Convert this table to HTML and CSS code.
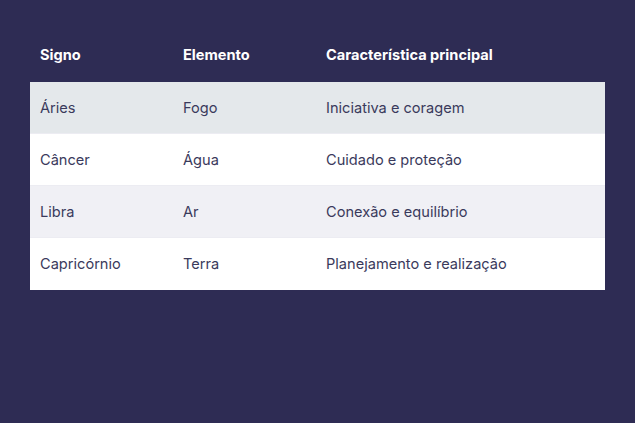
FILE: index.html
```html
<!DOCTYPE html>
<html lang="pt">
<head>
<meta charset="utf-8">
<link rel="stylesheet" href="styles.css">
</head>
<body>
<table class="signs">
  <thead>
    <tr><th class="c1">Signo</th><th class="c2">Elemento</th><th>Característica principal</th></tr>
  </thead>
  <tbody>
    <tr class="hl"><td>Áries</td><td>Fogo</td><td>Iniciativa e coragem</td></tr>
    <tr><td>Câncer</td><td>Água</td><td>Cuidado e proteção</td></tr>
    <tr class="alt"><td>Libra</td><td>Ar</td><td>Conexão e equilíbrio</td></tr>
    <tr><td>Capricórnio</td><td>Terra</td><td>Planejamento e realização</td></tr>
  </tbody>
</table>
</body>
</html>
```
FILE: styles.css
```css
html, body {
  margin: 0;
  background: #2e2c54;
}
body {
  padding: 30px;
  font-family: "Inter", sans-serif;
}
.signs {
  width: 575px;
  border-collapse: collapse;
  table-layout: fixed;
}
.signs .c1, .signs .c2 { width: 143px; }
.signs th {
  height: 52px;
  padding: 0 10px 3px;
  text-align: left;
  color: #ffffff;
  font-weight: 700;
  font-size: 14.6px;
  box-sizing: border-box;
}
.signs td {
  height: 52px;
  padding: 0 10px;
  color: #3a3a5c;
  font-size: 14.6px;
  background: #ffffff;
  box-sizing: border-box;
  box-shadow: inset 0 -1px 0 #ececf2;
}
.signs tr:last-child td { box-shadow: none; }
.signs tr.hl td { background: #e4e8eb; }
.signs tr.alt td { background: #f0f0f5; }
```
